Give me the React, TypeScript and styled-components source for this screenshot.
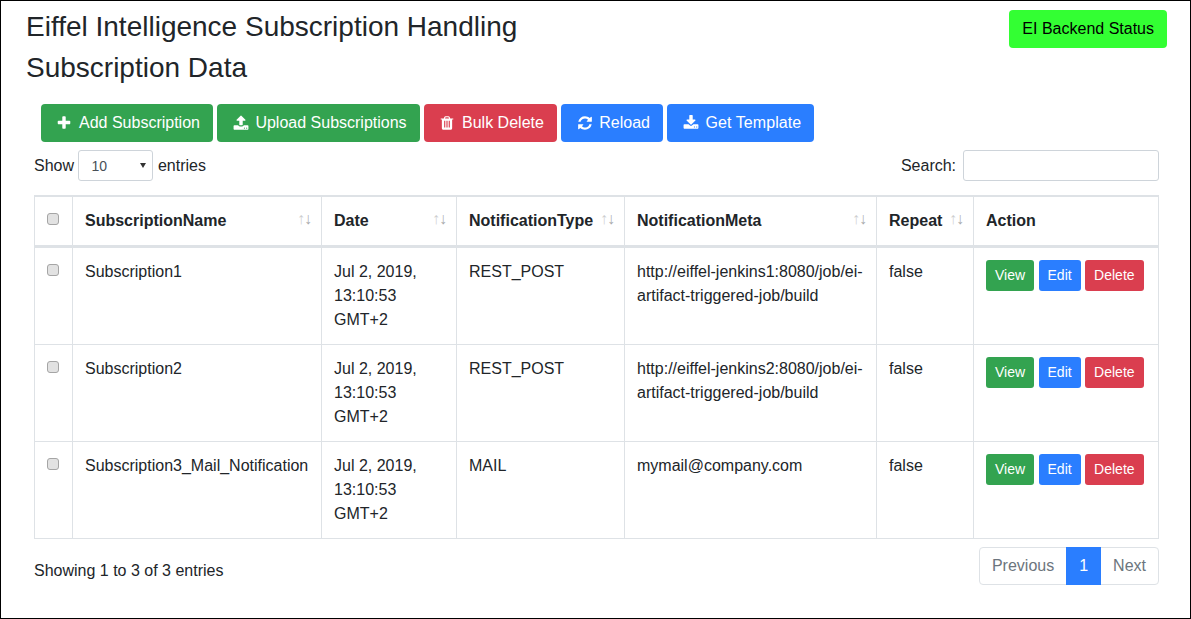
import React from "react";
import styled, { createGlobalStyle } from "styled-components";

const Global = createGlobalStyle`
  html, body { margin: 0; padding: 0; background: #fff; }
  body { font-family: "Liberation Sans", Arial, sans-serif; font-size: 16px; line-height: 24px; color: #212529; }
  * { box-sizing: border-box; }
`;

const colors = { success: "#33a350", danger: "#da3e4f", primary: "#2a7eff" };
type Tone = keyof typeof colors;

const Page = styled.div`
  width: 1191px;
  height: 619px;
  border: 1px solid #000;
  overflow: hidden;
`;
const TopBar = styled.header`
  display: flex;
  justify-content: space-between;
  align-items: flex-start;
  padding: 6px 23px 0 25px;
`;
const Titles = styled.div`
  display: flex;
  flex-direction: column;
  gap: 1px;
`;
const Title = styled.h1`
  margin: 0;
  font-size: 28px;
  font-weight: 400;
  line-height: 40px;
`;
const StatusButton = styled.button`
  margin-top: 3px;
  height: 38px;
  padding: 0 13px;
  border: 0;
  border-radius: 4px;
  background: #33ff33;
  color: #000;
  font: inherit;
`;
const Toolbar = styled.div`
  display: flex;
  gap: 4.45px;
  margin-top: 16px;
  padding-left: 40px;
`;
const ActionButton = styled.button<{ $tone: Tone; $tracking?: number }>`
  display: flex;
  align-items: center;
  height: 38px;
  padding: 0 13px;
  border: 0;
  border-radius: 4px;
  background: ${(p) => colors[p.$tone]};
  color: #fff;
  font: inherit;
  letter-spacing: ${(p) => p.$tracking ?? 0}px;
  white-space: nowrap;
`;
const IconBox = styled.span`
  display: flex;
  justify-content: center;
  flex: none;
  width: 20.57px;
  margin-right: 4.45px;
`;
const Controls = styled.div`
  display: flex;
  justify-content: space-between;
  align-items: center;
  height: 31px;
  margin: 8px 31px 0 33px;
`;
const ControlLabel = styled.label`
  display: flex;
  align-items: center;
  gap: 4.45px;
`;
const SelectWrap = styled.span`
  position: relative;
  display: block;
  width: 75px;
  height: 31px;
  &::after {
    content: "";
    position: absolute;
    top: 13px;
    right: 7px;
    border-style: solid;
    border-width: 5px 3px 0;
    border-color: #333 transparent transparent;
    pointer-events: none;
  }
`;
const PageSize = styled.select`
  display: block;
  width: 75px;
  height: 31px;
  padding: 4px 12px;
  border: 1px solid #ced4da;
  border-radius: 3px;
  background: #fff;
  color: #495057;
  appearance: none;
  font: 14px "Liberation Sans", Arial, sans-serif;
`;
const SearchInput = styled.input`
  width: 196px;
  height: 31px;
  margin-left: 2.5px;
  border: 1px solid #ced4da;
  border-radius: 3px;
  background: #fff;
`;
const Table = styled.table`
  width: 1125px;
  margin: 14px 0 0 33px;
  border-collapse: collapse;
  table-layout: fixed;
`;
const HeadCell = styled.th<{ $sortable?: boolean }>`
  position: relative;
  height: 50px;
  padding: 12px;
  border: 1px solid #dee2e6;
  border-top-width: 2px;
  border-bottom-width: 3px;
  text-align: left;
  font-weight: 700;
  white-space: nowrap;
  ${(p) =>
    p.$sortable &&
    `
    &::before, &::after {
      position: absolute;
      top: 10px;
      line-height: 24px;
      font-size: 16px;
      font-weight: 400;
      color: #212529;
    }
    &::before { content: "\\2191"; right: 16px; opacity: .22; }
    &::after { content: "\\2193"; right: 9px; opacity: .38; }
  `}
`;
const CheckHeadCell = styled(HeadCell)`
  padding: 0 12px;
  line-height: 0;
`;
const Cell = styled.td`
  height: 97px;
  padding: 12px;
  border: 1px solid #dee2e6;
  vertical-align: top;
  overflow-wrap: break-word;
`;
const CheckCell = styled(Cell)`
  padding: 0 12px;
  line-height: 0;
`;
const Check = styled.input.attrs({ type: "checkbox" })`
  appearance: none;
  display: block;
  width: 12px;
  height: 12px;
  margin: 16px 0 0;
  border: 1px solid #a5a5a5;
  border-radius: 3px;
  background: #e2e2e2;
`;
const HeadCheck = styled(Check)`
  margin: -5px 0 0;
`;
const RowActions = styled.div`
  display: flex;
  gap: 4.45px;
`;
const SmallButton = styled.button<{ $tone: Tone }>`
  height: 31px;
  padding: 0 9px 2px;
  border: 0;
  border-radius: 3px;
  background: ${(p) => colors[p.$tone]};
  color: #fff;
  font: 14px "Liberation Sans", Arial, sans-serif;
`;
const Footer = styled.div`
  display: flex;
  justify-content: space-between;
  align-items: flex-start;
  margin: 8px 31px 0 33px;
`;
const Info = styled.div`
  padding-top: 12px;
`;
const Pager = styled.nav`
  display: flex;
  height: 38px;
  border: 1px solid #dee2e6;
  border-radius: 4px;
`;
const PageLink = styled.a<{ $active?: boolean }>`
  display: flex;
  align-items: center;
  padding: 0 ${(p) => (p.$active ? 13 : 12)}px;
  background: ${(p) => (p.$active ? colors.primary : "transparent")};
  color: ${(p) => (p.$active ? "#fff" : "#6c757d")};
  margin: ${(p) => (p.$active ? "-1px 0" : "0")};
`;

const Fa4 = ({ d }: { d: string }) => (
  <svg width="16" height="16" viewBox="0 0 1792 1792" fill="currentColor" aria-hidden="true">
    <path d={d} />
  </svg>
);

const paths = {
  plus: "M1600 736v192q0 40-28 68t-68 28h-416v416q0 40-28 68t-68 28h-192q-40 0-68-28t-28-68v-416h-416q-40 0-68-28t-28-68v-192q0-40 28-68t68-28h416v-416q0-40 28-68t68-28h192q40 0 68 28t28 68v416h416q40 0 68 28t28 68z",
  upload: "M1344 1472q0-26-19-45t-45-19-45 19-19 45 19 45 45 19 45-19 19-45zm256 0q0-26-19-45t-45-19-45 19-19 45 19 45 45 19 45-19 19-45zm128-224v320q0 40-28 68t-68 28h-1472q-40 0-68-28t-28-68v-320q0-40 28-68t68-28h427q21 56 70.5 92t110.5 36h256q61 0 110.5-36t70.5-92h427q40 0 68 28t28 68zm-325-648q-17 40-59 40h-256v448q0 26-19 45t-45 19h-256q-26 0-45-19t-19-45v-448h-256q-42 0-59-40-17-39 14-69l448-448q18-19 45-19t45 19l448 448q31 30 14 69z",
  trash: "M704 1376v-704q0-14-9-23t-23-9h-64q-14 0-23 9t-9 23v704q0 14 9 23t23 9h64q14 0 23-9t9-23zm256 0v-704q0-14-9-23t-23-9h-64q-14 0-23 9t-9 23v704q0 14 9 23t23 9h64q14 0 23-9t9-23zm256 0v-704q0-14-9-23t-23-9h-64q-14 0-23 9t-9 23v704q0 14 9 23t23 9h64q14 0 23-9t9-23zm-544-992h448l-48-117q-7-9-17-11h-317q-10 2-17 11zm928 32v64q0 14-9 23t-23 9h-96v948q0 83-47 143.5t-113 60.5h-832q-66 0-113-58.5t-47-141.5v-952h-96q-14 0-23-9t-9-23v-64q0-14 9-23t23-9h309l70-167q15-37 54-63t79-26h320q40 0 79 26t54 63l70 167h309q14 0 23 9t9 23z",
  refresh: "M1639 1056q0 5-1 7-64 268-268 434.5t-478 166.5q-146 0-282.5-55t-243.5-157l-129 129q-19 19-45 19t-45-19-19-45v-448q0-26 19-45t45-19h448q26 0 45 19t19 45-19 45l-137 137q71 66 161 102t187 36q134 0 250-65t186-179q11-17 53-117 8-23 30-23h192q13 0 22.5 9.5t9.5 22.5zm25-800v448q0 26-19 45t-45 19h-448q-26 0-45-19t-19-45 19-45l138-138q-148-137-349-137-134 0-250 65t-186 179q-11 17-53 117-8 23-30 23h-199q-13 0-22.5-9.5t-9.5-22.5v-7q65-268 270-434.5t480-166.5q146 0 284 55.5t245 156.5l130-129q19-19 45-19t45 19 19 45z",
  download: "M1344 1344q0-26-19-45t-45-19-45 19-19 45 19 45 45 19 45-19 19-45zm256 0q0-26-19-45t-45-19-45 19-19 45 19 45 45 19 45-19 19-45zm128-224v320q0 40-28 68t-68 28h-1472q-40 0-68-28t-28-68v-320q0-40 28-68t68-28h465l135 136q58 56 136 56t136-56l136-136h464q40 0 68 28t28 68zm-325-569q17 41-14 70l-448 448q-18 19-45 19t-45-19l-448-448q-31-29-14-70 17-39 59-39h256v-448q0-26 19-45t45-19h256q26 0 45 19t19 45v448h256q42 0 59 39z",
};

const tools: { label: string; tone: Tone; icon: string; tracking?: number }[] = [
  { label: "Add Subscription", tone: "success", icon: paths.plus },
  { label: "Upload Subscriptions", tone: "success", icon: paths.upload },
  { label: "Bulk Delete", tone: "danger", icon: paths.trash },
  { label: "Reload", tone: "primary", icon: paths.refresh },
  { label: "Get Template", tone: "primary", icon: paths.download, tracking: 0.08 },
];

const columns = [
  { w: 249, label: "SubscriptionName" },
  { w: 135, label: "Date" },
  { w: 168, label: "NotificationType" },
  { w: 252, label: "NotificationMeta" },
  { w: 97, label: "Repeat" },
];

const rows = [
  { name: "Subscription1", type: "REST_POST", meta: "http://eiffel-jenkins1:8080/job/ei-artifact-triggered-job/build" },
  { name: "Subscription2", type: "REST_POST", meta: "http://eiffel-jenkins2:8080/job/ei-artifact-triggered-job/build" },
  { name: "Subscription3_Mail_Notification", type: "MAIL", meta: "mymail@company.com" },
];

export default function App() {
  return (
    <Page>
      <Global />
      <TopBar>
        <Titles>
          <Title>Eiffel Intelligence Subscription Handling</Title>
          <Title>Subscription Data</Title>
        </Titles>
        <StatusButton>EI Backend Status</StatusButton>
      </TopBar>
      <Toolbar>
        {tools.map((t) => (
          <ActionButton key={t.label} $tone={t.tone} $tracking={t.tracking}>
            <IconBox>
              <Fa4 d={t.icon} />
            </IconBox>
            {t.label}
          </ActionButton>
        ))}
      </Toolbar>
      <Controls>
        <ControlLabel>
          Show
          <SelectWrap>
            <PageSize defaultValue="10">
              <option>10</option>
              <option>25</option>
              <option>50</option>
            </PageSize>
          </SelectWrap>
          entries
        </ControlLabel>
        <ControlLabel>
          Search:
          <SearchInput />
        </ControlLabel>
      </Controls>
      <Table>
        <colgroup>
          <col style={{ width: 38 }} />
          {columns.map((c) => (
            <col key={c.label} style={{ width: c.w }} />
          ))}
          <col style={{ width: 185 }} />
        </colgroup>
        <thead>
          <tr>
            <CheckHeadCell>
              <HeadCheck />
            </CheckHeadCell>
            {columns.map((c) => (
              <HeadCell key={c.label} $sortable>
                {c.label}
              </HeadCell>
            ))}
            <HeadCell>Action</HeadCell>
          </tr>
        </thead>
        <tbody>
          {rows.map((r) => (
            <tr key={r.name}>
              <CheckCell>
                <Check />
              </CheckCell>
              <Cell>{r.name}</Cell>
              <Cell>Jul 2, 2019, 13:10:53 GMT+2</Cell>
              <Cell>{r.type}</Cell>
              <Cell>{r.meta}</Cell>
              <Cell>false</Cell>
              <Cell>
                <RowActions>
                  <SmallButton $tone="success">View</SmallButton>
                  <SmallButton $tone="primary">Edit</SmallButton>
                  <SmallButton $tone="danger">Delete</SmallButton>
                </RowActions>
              </Cell>
            </tr>
          ))}
        </tbody>
      </Table>
      <Footer>
        <Info>Showing 1 to 3 of 3 entries</Info>
        <Pager>
          <PageLink>Previous</PageLink>
          <PageLink $active>1</PageLink>
          <PageLink>Next</PageLink>
        </Pager>
      </Footer>
    </Page>
  );
}
